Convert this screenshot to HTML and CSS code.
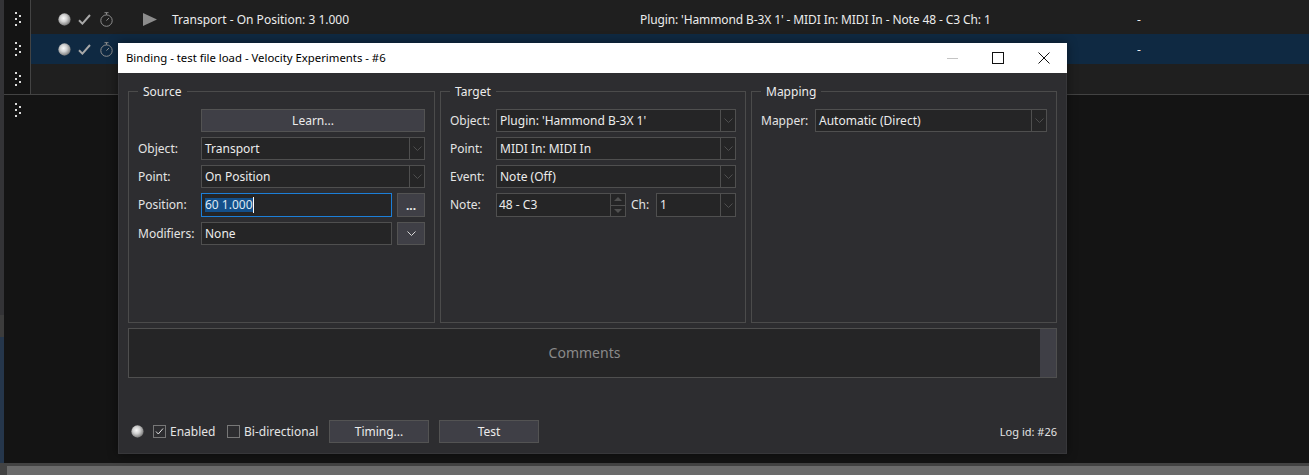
FILE: index.html
```html
<!DOCTYPE html>
<html lang="en">
<head>
<meta charset="utf-8">
<title>Binding - test file load - Velocity Experiments - #6</title>
<link rel="stylesheet" href="styles.css">
</head>
<body>
<svg class="defs" width="0" height="0" aria-hidden="true">
  <defs>
    <radialGradient id="ledfill" cx="0.42" cy="0.4" r="0.62">
      <stop offset="0" stop-color="#fafafa"/>
      <stop offset="0.45" stop-color="#d2d2d2"/>
      <stop offset="0.85" stop-color="#8f8f8f"/>
      <stop offset="1" stop-color="#6a6a6a"/>
    </radialGradient>
    <symbol id="grip" viewBox="0 0 6 14">
      <rect x="0" y="0" width="2" height="2"/><rect x="4" y="3" width="2" height="2"/><rect x="0" y="6" width="2" height="2"/><rect x="4" y="9" width="2" height="2"/><rect x="0" y="12" width="2" height="2"/>
    </symbol>
    <symbol id="led" viewBox="0 0 14 14"><circle cx="7" cy="7" r="6.6" fill="url(#ledfill)"/></symbol>
    <symbol id="check" viewBox="0 0 13 11"><path d="M1 6.200 4.400 9.600 12 1" fill="none" stroke="#a8a8a8" stroke-width="2"/></symbol>
    <symbol id="timer" viewBox="0 0 13 15"><circle cx="6.500" cy="8.600" r="5.700" fill="none" stroke="#8e8e8e"/><path d="M4.500 .7h4M6.500 .7v2M6.500 8.600 9 6" fill="none" stroke="#8e8e8e"/></symbol>
    <symbol id="chev" viewBox="0 0 9 5"><path d="M.5 .5 4.500 4.500 8.500 .5" fill="none" stroke="currentColor"/></symbol>
  </defs>
</svg>

<div class="app">
  <div class="edge"><div class="edge-top"></div><div class="edge-mid"></div><div class="edge-low"></div></div>
  <div class="main">
    <div class="row row-first">
      <div class="grip"><svg class="grip-ic"><use href="#grip"/></svg></div>
      <div class="cells">
        <span class="c-led"><svg class="ic-led"><use href="#led"/></svg></span>
        <span class="c-check"><svg class="ic-check"><use href="#check"/></svg></span>
        <span class="c-timer"><svg class="ic-timer"><use href="#timer"/></svg></span>
        <span class="c-play"><svg class="ic-play" viewBox="0 0 14 13"><path d="M0 0 14 6.500 0 13Z" fill="#8c8c8c"/></svg></span>
        <span class="c-src">Transport - On Position: 3 1.000</span>
        <span class="c-tgt">Plugin: 'Hammond B-3X 1' - MIDI In: MIDI In - Note 48 - C3 Ch: 1</span>
        <span class="c-dash">-</span>
      </div>
    </div>
    <div class="row row-sel">
      <div class="grip"><svg class="grip-ic"><use href="#grip"/></svg></div>
      <div class="cells">
        <span class="c-led"><svg class="ic-led"><use href="#led"/></svg></span>
        <span class="c-check"><svg class="ic-check"><use href="#check"/></svg></span>
        <span class="c-timer"><svg class="ic-timer"><use href="#timer"/></svg></span>
        <span class="c-play"></span>
        <span class="c-src"></span>
        <span class="c-tgt"></span>
        <span class="c-dash">-</span>
      </div>
    </div>
    <div class="row row-empty">
      <div class="grip"><svg class="grip-ic"><use href="#grip"/></svg></div>
      <div class="cells"></div>
    </div>
    <div class="lower">
      <div class="grip grip-low"><svg class="grip-ic"><use href="#grip"/></svg></div>
    </div>
  </div>
</div>
<div class="bottom"><div class="bottom-fill"></div></div>

<section class="dialog">
  <header class="titlebar">
    <span class="title">Binding - test file load - Velocity Experiments - #6</span>
    <div class="winbtns">
      <svg class="win" viewBox="0 0 46 30"><path d="M18 15.500h11" stroke="#c4c4c4"/></svg>
      <svg class="win" viewBox="0 0 46 30"><rect x="17.500" y="9.500" width="11" height="11" fill="none" stroke="#111"/></svg>
      <svg class="win" viewBox="0 0 46 30"><path d="M17.500 9.500 28.500 20.500M28.500 9.500 17.500 20.500" stroke="#111" fill="none"/></svg>
    </div>
  </header>
  <div class="dlg-body">
    <div class="groups">
      <fieldset class="group">
        <legend>Source</legend>
        <div class="form form-source">
          <span></span><button class="btn btn-full">Learn...</button>
          <label>Object:</label>
          <div class="combo"><span class="val">Transport</span><span class="arrow"><svg class="chev"><use href="#chev"/></svg></span></div>
          <label>Point:</label>
          <div class="combo"><span class="val">On Position</span><span class="arrow"><svg class="chev"><use href="#chev"/></svg></span></div>
          <label>Position:</label>
          <div class="pair"><div class="input focus"><span class="sel">60 1.000</span><span class="caret"></span></div><button class="btn btn-small btn-dots">...</button></div>
          <label>Modifiers:</label>
          <div class="pair"><div class="input">None</div><button class="btn btn-small btn-chev"><svg class="chev chev-on"><use href="#chev"/></svg></button></div>
        </div>
      </fieldset>
      <fieldset class="group">
        <legend>Target</legend>
        <div class="form form-target">
          <label>Object:</label>
          <div class="combo"><span class="val">Plugin: 'Hammond B-3X 1'</span><span class="arrow"><svg class="chev"><use href="#chev"/></svg></span></div>
          <label>Point:</label>
          <div class="combo"><span class="val">MIDI In: MIDI In</span><span class="arrow"><svg class="chev"><use href="#chev"/></svg></span></div>
          <label>Event:</label>
          <div class="combo"><span class="val">Note (Off)</span><span class="arrow"><svg class="chev"><use href="#chev"/></svg></span></div>
          <label>Note:</label>
          <div class="note-line">
            <div class="spin"><span class="spin-val">48 - C3</span><span class="spin-btns"><i class="up"></i><i class="down"></i></span></div>
            <label class="ch-label">Ch:</label>
            <div class="combo combo-ch"><span class="val">1</span><span class="arrow"><svg class="chev"><use href="#chev"/></svg></span></div>
          </div>
        </div>
      </fieldset>
      <fieldset class="group">
        <legend>Mapping</legend>
        <div class="form form-mapping">
          <label>Mapper:</label>
          <div class="combo"><span class="val">Automatic (Direct)</span><span class="arrow"><svg class="chev"><use href="#chev"/></svg></span></div>
        </div>
      </fieldset>
    </div>
    <div class="comments"><span class="comments-text">Comments</span><span class="comments-scroll"></span></div>
    <footer class="foot">
      <svg class="ic-led foot-led"><use href="#led"/></svg>
      <span class="cb cb-on"><svg viewBox="0 0 11 11"><path d="M2 5.500 4.300 8 9 2.500" fill="none" stroke="#e0e0e0"/></svg></span>
      <span class="cb-label cb-label-en">Enabled</span>
      <span class="cb"></span>
      <span class="cb-label cb-label-bi">Bi-directional</span>
      <button class="btn btn-foot">Timing...</button>
      <button class="btn btn-foot">Test</button>
      <span class="logid">Log id: #26</span>
    </footer>
  </div>
</section>
</body>
</html>
```
FILE: styles.css
```css
* { box-sizing: border-box; }
html, body { margin: 0; height: 475px; overflow: hidden; background: #141414; }
body {
  position: relative;
  font-family: "Noto Sans", "Open Sans", sans-serif;
  font-size: 12px;
  color: #ececec;
}
.defs { position: absolute; }

.app { display: flex; height: 463px; }
.edge { width: 4px; display: flex; flex-direction: column; }
.edge-top { height: 315px; background: #333336; }
.edge-mid { height: 22px; background: #3c3c3c; }
.edge-low { flex: 1; background: #25364b; }
.main { flex: 1; display: flex; flex-direction: column; min-width: 0; }

.row { display: flex; height: 30px; }
.row-first { height: 34px; }
.row-first .cells { padding-top: 4px; }
.grip {
  width: 27px;
  background: #141414;
  border-right: 1px solid #434343;
  display: flex; align-items: center; justify-content: flex-start;
  padding-left: 11px;
}
.row-first .grip { padding-top: 4px; }
.grip-ic { width: 6px; height: 14px; fill: #dadada; display: block; }
.cells { flex: 1; display: flex; align-items: center; padding-left: 27px; background: #1f1f1f; }
.row-sel .cells { background: #0f2942; }
.lower { flex: 1; border-top: 1px solid #434343; background: #141414; }
.grip-low { width: 26px; height: 30px; border-right: 0; background: transparent; }

.cells > span { display: flex; align-items: center; flex: none; white-space: nowrap; }
.c-led { width: 21px; }
.c-check { width: 22px; margin-left: -1px; }
.c-timer { width: 43px; }
.c-play { width: 29px; }
.c-src { width: 468px; }
.c-tgt { width: 497px; letter-spacing: -0.11px; }
.ic-led { width: 13px; height: 13px; display: block; }
.ic-check { width: 13px; height: 11px; display: block; }
.ic-timer { width: 13px; height: 15px; display: block; }
.ic-play { width: 14px; height: 13px; display: block; }

.bottom { height: 12px; background: #434343; padding: 3px 0 0 7px; }
.bottom-fill { height: 100%; background: #6b6b6b; }

/* floating window */
.dialog {
  position: absolute; left: 118px; top: 43px;
  width: 949px; height: 411px;
  display: flex; flex-direction: column;
  background: #2d2d30;
  box-shadow: 0 0 10px rgba(0,0,0,.45);
}
.titlebar { height: 30px; flex: none; background: #fff; color: #000; display: flex; align-items: center; justify-content: space-between; padding-left: 8px; }
.title { font-size: 11.35px; padding-bottom: 2px; }
.winbtns { display: flex; }
.win { width: 46px; height: 30px; display: block; }
.dlg-body {
  flex: 1; display: flex; flex-direction: column;
  padding: 10px;
  border: 1px solid #37373a; border-top: 0;
}
.groups { display: grid; grid-template-columns: 307px 306px 306px; column-gap: 5px; margin-left: -1px; height: 240px; }
.group { margin: 0; padding: 9px 9px 0 9px; border: 1px solid #4b4b4b; min-width: 0; }
.group legend { margin-left: 0; padding: 0 5px; font-size: 12px; line-height: 17px; color: #ececec; }

.form { display: grid; grid-auto-rows: 23px; row-gap: 5px; align-items: center; }
.form-source { grid-template-columns: 63px 224px; grid-template-rows: 23px 23px 23px 24px 23px; }
.form-target { grid-template-columns: 46px 240px; grid-template-rows: 23px 23px 23px 24px; }
.form-mapping { grid-template-columns: 54px 232px; }
.form label { color: #e4e4e4; white-space: nowrap; align-self: start; line-height: 23px; }

.combo { height: 23px; display: flex; border: 1px solid #4f4f4f; background: #252526; }
.combo .val { flex: 1; padding-left: 3px; line-height: 21px; }
.arrow { width: 15px; flex: none; border-left: 1px solid #4f4f4f; display: flex; align-items: center; justify-content: center; color: #4e4e4e; }
.chev { width: 9px; height: 5px; display: block; }
.chev-on { color: #d8d8d8; }

.btn { font: inherit; color: #ececec; background: #3f3f46; border: 1px solid #535353; padding: 0; height: 23px; display: flex; align-items: center; justify-content: center; }
.btn-full { width: 224px; }
.btn-small { width: 28px; height: 23px; }
.btn-dots { height: 24px; align-items: flex-end; padding-bottom: 4px; line-height: 1; font-weight: 700; }
.pair { display: flex; justify-content: space-between; width: 224px; height: 100%; }
.input { width: 191px; border: 1px solid #4f4f4f; background: #252526; padding-left: 3px; line-height: 21px; display: flex; align-items: center; }
.input.focus { border-color: #1c7fd8; padding-bottom: 1px; }
.sel { background: #14508a; color: #dfe9f2; line-height: 14px; height: 14px; }
.caret { width: 1px; height: 16px; background: #fff; }

.note-line { display: flex; height: 24px; }
.spin { width: 130px; display: flex; border: 1px solid #4f4f4f; background: #252526; }
.spin-val { flex: 1; padding-left: 2px; line-height: 21px; }
.spin-btns { width: 15px; border-left: 1px solid #4f4f4f; display: flex; flex-direction: column; }
.spin-btns i { flex: 1; display: flex; align-items: center; justify-content: center; }
.spin-btns .up { border-bottom: 1px solid #4f4f4f; }
.spin-btns i::after { content: ""; width: 0; height: 0; border-left: 4px solid transparent; border-right: 4px solid transparent; }
.spin-btns .up::after { border-bottom: 4px solid #505050; }
.spin-btns .down::after { border-top: 4px solid #505050; }
.form .ch-label { margin-left: 5px; width: 25px; }
.combo-ch { width: 80px; height: 24px; }

.comments { height: 50px; margin: 5px 0 0 -1px; width: 929px; flex: none; display: flex; border: 1px solid #4f4f4f; background: #252526; }
.comments-text { flex: 1; display: flex; align-items: center; justify-content: center; padding-bottom: 2px; font-size: 14px; color: #8a8a8a; }
.comments-scroll { width: 16px; background: #3f3f46; }

.foot { margin-top: auto; margin-left: -1px; display: flex; align-items: center; height: 23px; width: 929px; }
.foot-led { margin: 0 9px 0 3px; }
.cb { width: 13px; height: 13px; border: 1px solid #777; display: block; flex: none; }
.cb svg { display: block; width: 11px; height: 11px; }
.cb-label { color: #e4e4e4; }
.cb-label-en { margin-left: 4px; width: 57px; }
.cb-label-bi { margin-left: 4px; width: 85px; }
.btn-foot { width: 100px; margin-right: 10px; }
.logid { margin-left: auto; color: #e4e4e4; font-size: 11px; }
```
